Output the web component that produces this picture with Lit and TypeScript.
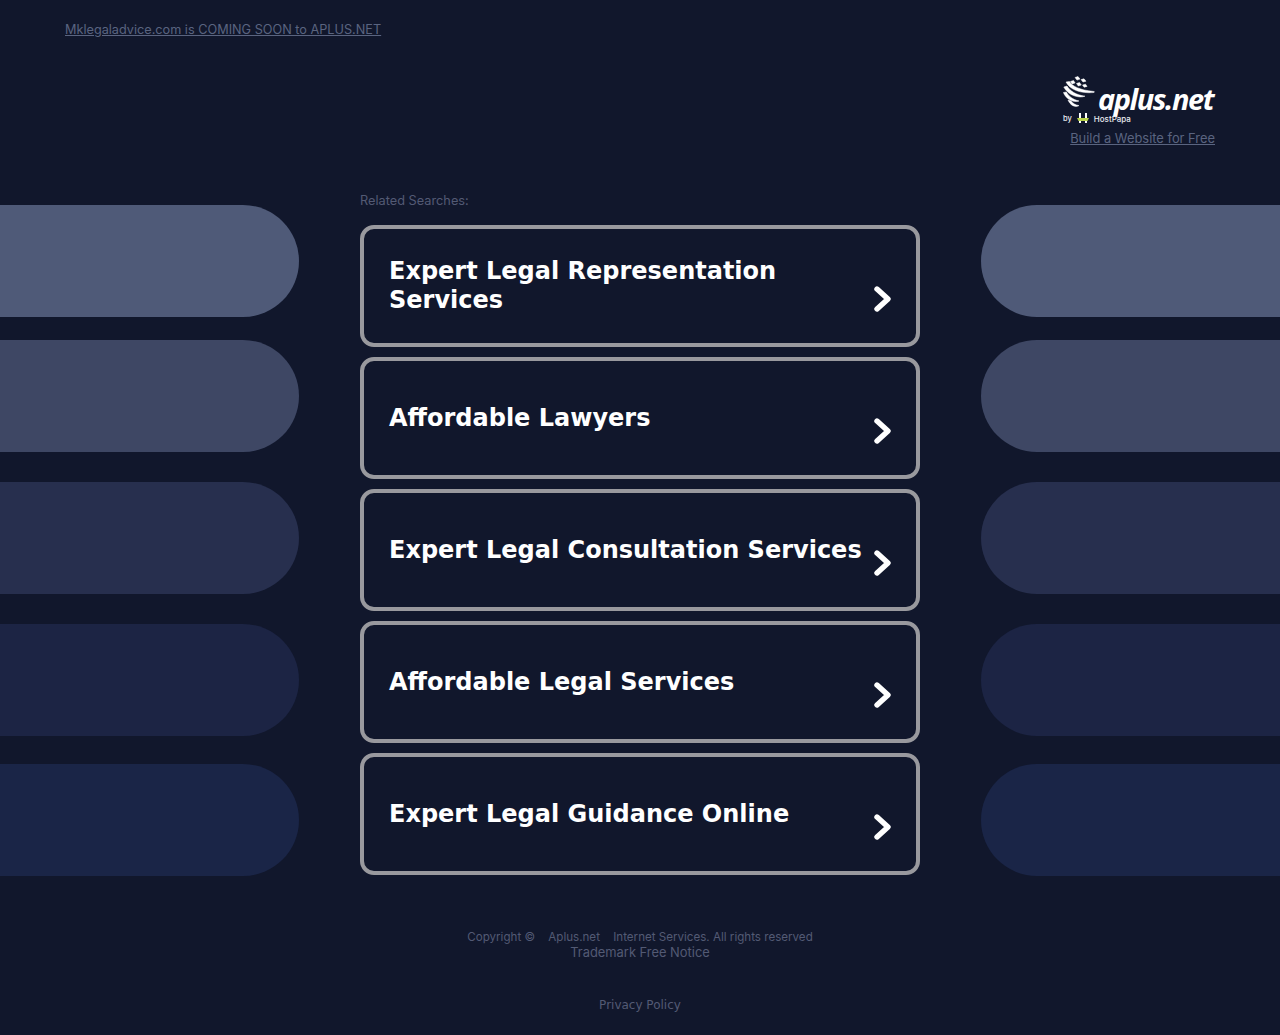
import { LitElement, html, css, svg } from "lit";
import { customElement } from "lit/decorators.js";

const searches = [
  "Expert Legal Representation Services",
  "Affordable Lawyers",
  "Expert Legal Consultation Services",
  "Affordable Legal Services",
  "Expert Legal Guidance Online",
];

const chevron = html`<svg class="chev" viewBox="0 0 20 28" aria-hidden="true"><polyline points="4,4 15,14 4,24" fill="none" stroke="#fff" stroke-width="5.4" stroke-linecap="round" stroke-linejoin="round"></polyline></svg>`;

const globe = svg`
  <g fill="#fff" stroke="#fff" stroke-width=".5" stroke-linejoin="round">
    <path d="M12 1.5 l3 -1 2 2.6 -3 1z M18 3.6 l3 -.8 2 2.4 -3 .8z M7.5 5.5 l3 -1 1.6 2.4 -3 1z M13.5 7.5 l3 -1 1.8 2.5 -3 1z M19.5 9 l3 -.8 1.6 2.2 -3 .8z"/>
    <path d="M3 6 L6.5 5.5 C9 10 16 14 31 15.5 C32 16 31 16.6 30 16.6 C18 17.5 7 14 3 6 Z"/>
    <path d="M.8 11 L4 10 C7 15 13 19 22 20.2 C16 22.5 5 19.5 .8 11 Z"/>
    <path d="M.4 16.5 L3.4 16 C5.5 20 9.5 23.5 16 25 C10 27 3 23 .4 16.5 Z"/>
    <path d="M5 24 L8 25 C10 27.5 12.5 29 16 29.6 C12 32 7 29 5 24 Z"/>
  </g>
`;

const hp = svg`
  <path d="M2 0 h2 v10 h-2z M8 0 h2 v10 h-2z" fill="#fff"/>
  <path d="M0 5 h12 l-1.5 3 h-9z" fill="#b9d34a"/>
`;

@customElement("app-root")
export class AppRoot extends LitElement {
  static styles = css`
    :host {
      display: block;
      min-height: 1035px;
      background: #11172c;
      font-family: "DejaVu Sans", Verdana, sans-serif;
      color: #535a74;
      overflow: hidden;
    }
    a { color: inherit; }
    .top {
      height: 205px;
      box-sizing: border-box;
      padding: 22px 65px 0;
      display: flex;
      justify-content: space-between;
      align-items: flex-start;
    }
    .domain, .build, .label, .copy, .tm { font-family: Inter, "Liberation Sans", sans-serif; }
    .domain { font-size: 12.7px; line-height: 15px; color: #5a6480; }
    .brand {
      margin-top: 54px;
      display: flex;
      flex-direction: column;
      align-items: flex-end;
    }
    .logo { width: 152px; height: 48px; display: grid; grid-template-columns: 35px 1fr; grid-template-rows: 37px 11px; }
    .globe { width: 34px; height: 34px; display: block; }
    .wordmark {
      font-family: "Open Sans", sans-serif;
      font-style: italic;
      font-weight: 700;
      font-size: 29px;
      line-height: 28px;
      letter-spacing: -1.45px;
      color: #fff;
      align-self: end;
    }
    .by {
      grid-column: 1 / 3;
      display: flex;
      align-items: center;
      font-family: Inter, sans-serif;
      font-size: 8px;
      font-weight: 500;
      color: #e8eaef;
    }
    .hp { width: 12px; height: 10px; margin: -2px 5px 0 5px; }
    .by span:first-child { font-size: 7.5px; }
    .build { font-size: 12.9px; line-height: 15px; margin-top: 7px; color: #5a6480; }
    .main { display: flex; align-items: flex-start; justify-content: space-between; }
    .side { width: 299px; display: flex; flex-direction: column; }
    .pill { height: 112px; background: #4f5a78; }
    .left .pill { border-radius: 0 56px 56px 0; }
    .right .pill { border-radius: 56px 0 0 56px; }
    .pill:nth-child(2) { margin-top: 23px; background: #3e4764; }
    .pill:nth-child(3) { margin-top: 30px; background: #272f4e; }
    .pill:nth-child(4) { margin-top: 30px; background: #1c2444; }
    .pill:nth-child(5) { margin-top: 28px; background: #1a2547; }
    .center { width: 560px; }
    .label { font-size: 12.75px; line-height: 15px; height: 20px; margin-top: -12px; }
    .list { display: flex; flex-direction: column; gap: 10px; margin-top: 12px; }
    .card {
      box-sizing: border-box;
      height: 122px;
      border: 4px solid #99999e;
      border-radius: 14px;
      padding: 0 25px;
      display: flex;
      align-items: center;
      justify-content: space-between;
      gap: 4px;
      color: #fff;
      text-decoration: none;
      font-weight: 700;
      font-size: 24px;
      line-height: 29px;
    }
    .chev { flex: none; width: 20px; height: 28px; margin: 26px -2px 0 0; }
    footer {
      margin-top: 54px;
      text-align: center;
      line-height: 15px;
    }
    .copy { font-size: 11.6px; }
    .copy span + span { margin-left: 10px; }
    .tm { font-size: 12.9px; display: block; text-decoration: none; }
    .pp { font-size: 12px; display: block; margin-top: 38px; text-decoration: none; }
  `;

  private pills(side: string) {
    return html`<div class="side ${side}">
      ${[0, 1, 2, 3, 4].map(() => html`<div class="pill"></div>`)}
    </div>`;
  }

  render() {
    return html`
      <div class="top">
        <a class="domain" href="#">Mklegaladvice.com is COMING SOON to APLUS.NET</a>
        <div class="brand">
          <div class="logo">
            <svg class="globe" viewBox="0 0 34 34">${globe}</svg>
            <div class="wordmark">aplus.net</div>
            <div class="by"><span>by</span><svg class="hp" viewBox="0 0 12 10">${hp}</svg><span>HostPapa</span></div>
          </div>
          <a class="build" href="#">Build a Website for Free</a>
        </div>
      </div>
      <div class="main">
        ${this.pills("left")}
        <div class="center">
          <div class="label">Related Searches:</div>
          <div class="list">
            ${searches.map((s) => html`<a class="card" href="#"><span>${s}</span>${chevron}</a>`)}
          </div>
        </div>
        ${this.pills("right")}
      </div>
      <footer>
        <div class="copy"><span>Copyright ©</span> <span>Aplus.net</span> <span>Internet Services. All rights reserved</span></div>
        <a class="tm" href="#">Trademark Free Notice</a>
        <a class="pp" href="#">Privacy Policy</a>
      </footer>
    `;
  }
}
